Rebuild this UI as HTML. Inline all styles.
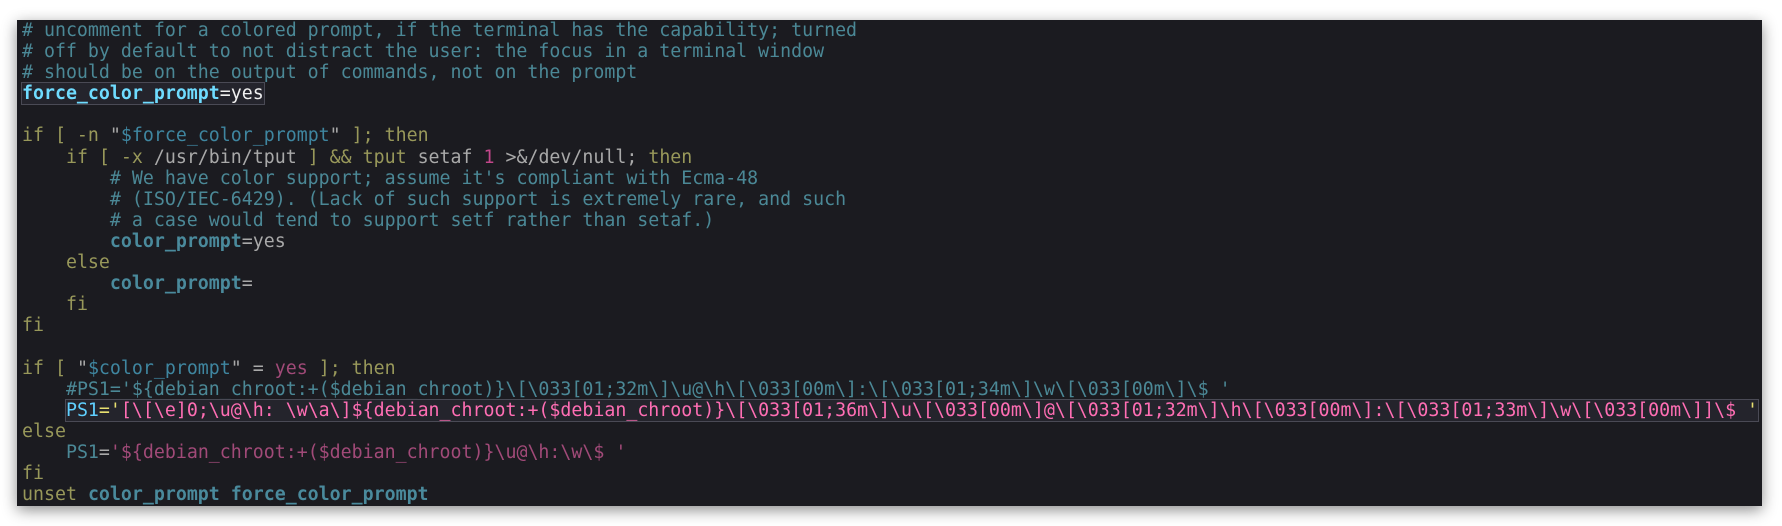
<!DOCTYPE html>
<html><head><meta charset="utf-8"><style>
html,body{margin:0;padding:0;background:#fff;width:1782px;height:526px;overflow:hidden}
.panel{position:absolute;left:17px;top:20px;width:1745px;height:486px;background:#1b1b20;box-shadow:0 4px 14px rgba(0,0,0,.45)}
pre{margin:0;position:absolute;left:5px;top:0;font-family:"DejaVu Sans Mono","Liberation Mono",monospace;font-size:18.25px;line-height:21.1px;color:#a9a9a9;white-space:pre}
.c{color:#4b8896}.k{color:#98985a}.v{color:#4a8a9c;font-weight:bold}.s{color:#3f86a0}.p{color:#a14a78}.n{color:#c2468a}
.hl{background:#24242c;outline:1px solid #4a4a55}
.bc{color:#6fdcff;font-weight:bold}.w{color:#f0f0f0}.cy{color:#5fd0ff}.y{color:#e8e070}.pk{color:#ff6eb4}
</style></head><body><div class="panel"><pre><span class="c"># uncomment for a colored prompt, if the terminal has the capability; turned
# off by default to not distract the user: the focus in a terminal window
# should be on the output of commands, not on the prompt</span>
<span class="hl"><span class="bc">force_color_prompt</span><span class="w">=yes</span></span>

<span class="k">if [ -n </span>"<span class="s">$force_color_prompt</span>" <span class="k">]; then</span>
    <span class="k">if [ -x</span> /usr/bin/tput <span class="k">] &amp;&amp; tput</span> setaf <span class="n">1</span> &gt;&amp;/dev/null; <span class="k">then</span>
        <span class="c"># We have color support; assume it's compliant with Ecma-48
        # (ISO/IEC-6429). (Lack of such support is extremely rare, and such
        # a case would tend to support setf rather than setaf.)</span>
        <span class="v">color_prompt</span>=yes
    <span class="k">else</span>
        <span class="v">color_prompt</span>=
    <span class="k">fi</span>
<span class="k">fi</span>

<span class="k">if [ </span>"<span class="s">$color_prompt</span>" = <span class="p">yes</span> <span class="k">]; then</span>
    <span class="c">#PS1='${debian_chroot:+($debian_chroot)}\[\033[01;32m\]\u@\h\[\033[00m\]:\[\033[01;34m\]\w\[\033[00m\]\$ '</span>
    <span class="hl"><span class="cy">PS1</span><span class="y">='</span><span class="pk">[\[\e]0;\u@\h: \w\a\]${debian_chroot:+($debian_chroot)}\[\033[01;36m\]\u\[\033[00m\]@\[\033[01;32m\]\h\[\033[00m\]:\[\033[01;33m\]\w\[\033[00m\]]\$ </span><span class="y">'</span></span>
<span class="k">else</span>
    <span class="c">PS1</span>=<span class="p">'${debian_chroot:+($debian_chroot)}\u@\h:\w\$ '</span>
<span class="k">fi</span>
<span class="k">unset</span> <span class="v">color_prompt force_color_prompt</span></pre></div></body></html>
